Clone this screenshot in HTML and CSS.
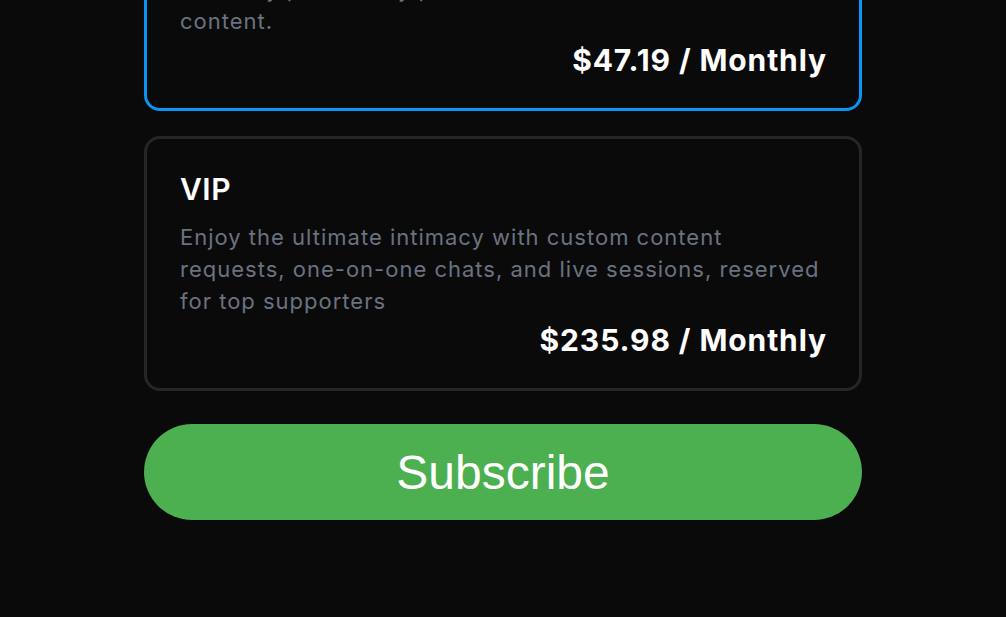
FILE: index.html
```html
<!DOCTYPE html>
<html lang="en">
<head>
<meta charset="utf-8">
<title>Subscription tiers</title>
<link rel="stylesheet" href="styles.css">
</head>
<body>
<main class="tiers">
  <section class="tier tier--selected">
    <h2 class="tier__name">Premium</h2>
    <p class="tier__desc">Unlock exclusive photos, early access to new drops, and a weekly peek at my private<br>content.</p>
    <p class="tier__price">$47.19 / Monthly</p>
  </section>
  <section class="tier">
    <h2 class="tier__name">VIP</h2>
    <p class="tier__desc">Enjoy the ultimate intimacy with custom content requests, one-on-one chats, and live sessions, reserved for top supporters</p>
    <p class="tier__price">$235.98 / Monthly</p>
  </section>
  <button class="subscribe" type="button">Subscribe</button>
</main>
</body>
</html>
```
FILE: styles.css
```css
* { box-sizing: border-box; }
html, body {
  margin: 0;
  padding: 0;
  background: #0a0a0a;
}
body {
  font-family: Inter, "Noto Sans", sans-serif;
  color: #fff;
}
.tiers {
  width: 718px;
  margin: -144px auto 0;
  display: flex;
  flex-direction: column;
}
.tier {
  border: 3px solid #262626;
  border-radius: 16px;
  padding: 32px 32px 33px 33px;
  margin-bottom: 25px;
  height: 255px;
  display: flex;
  flex-direction: column;
}
.tier--selected {
  border-color: #0a95f5;
}
.tier__name {
  margin: 0 0 14px;
  font-size: 30px;
  line-height: 36px;
  font-weight: 600;
  letter-spacing: 0.5px;
}
.tier__desc {
  margin: 0;
  font-size: 22px;
  line-height: 32px;
  color: #6b7280;
  font-weight: 400;
  letter-spacing: 1px;
}
.tier__price {
  margin: auto 0 0;
  text-align: right;
  font-size: 30px;
  line-height: 30px;
  font-weight: 700;
  letter-spacing: 0.9px;
}
.subscribe {
  margin-top: 8px;
  height: 96px;
  border: none;
  border-radius: 48px;
  background: #4caf50;
  color: #fff;
  font-family: "Liberation Sans", Arial, sans-serif;
  font-size: 48px;
  cursor: pointer;
}
```
